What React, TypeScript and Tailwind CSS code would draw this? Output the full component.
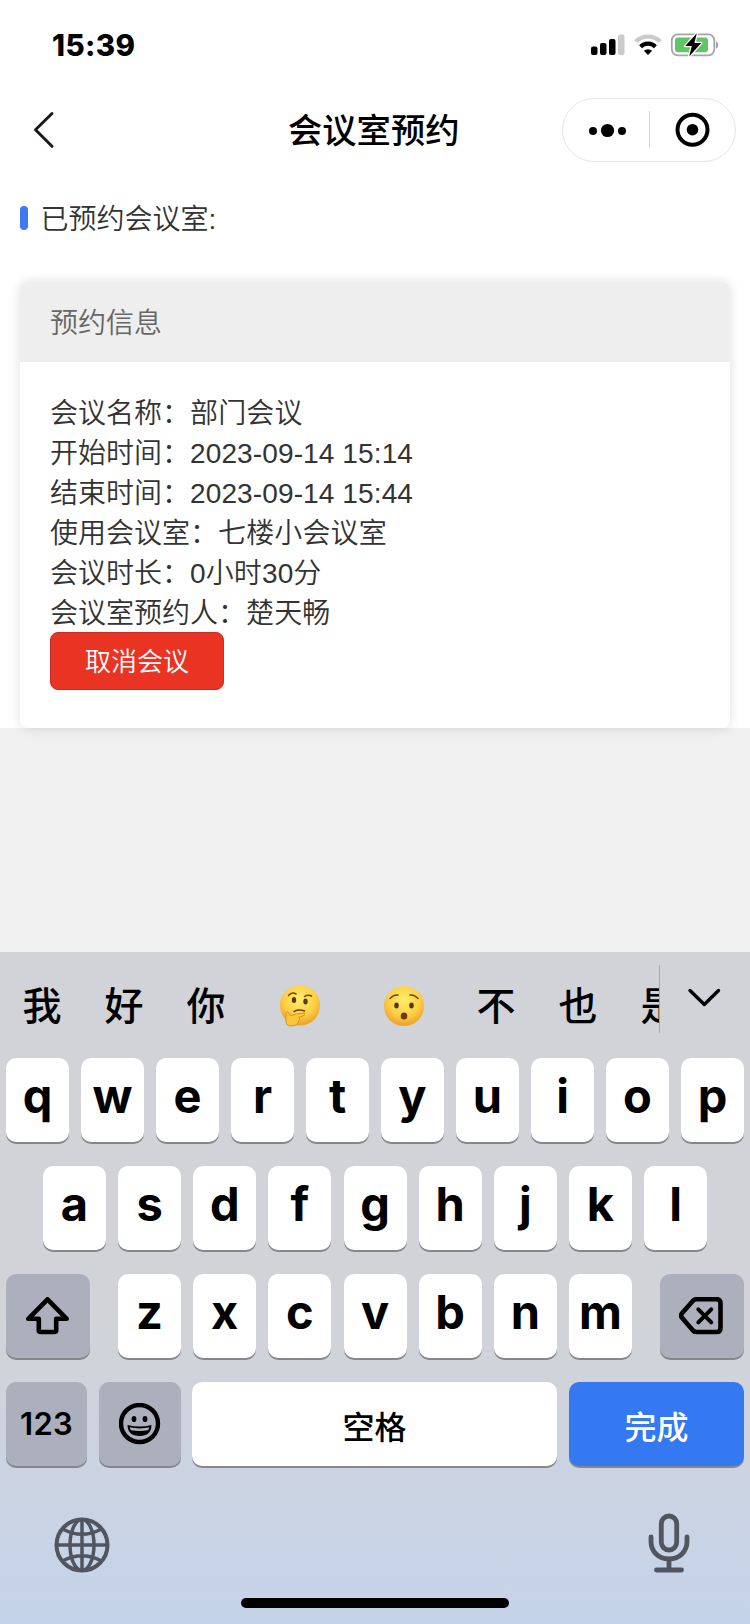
import * as React from "react";

const TEXT_FONT = "font-['Liberation_Sans','Noto_Sans_CJK_SC',sans-serif]";
const KEY_FONT = "font-['Inter','Noto_Sans_CJK_SC',sans-serif]";

const BOOKING = [
  { label: "会议名称", value: "部门会议" },
  { label: "开始时间", value: "2023-09-14 15:14" },
  { label: "结束时间", value: "2023-09-14 15:44" },
  { label: "使用会议室", value: "七楼小会议室" },
  { label: "会议时长", value: "0小时30分" },
  { label: "会议室预约人", value: "楚天畅" },
];

export default function App() {
  return (
    <div className={`flex h-[1624px] w-[750px] flex-col overflow-hidden bg-[#f0f0f0] text-[#333] ${TEXT_FONT}`}>
      <div className="h-[728px] shrink-0 bg-white">
        <StatusBar />
        <NavBar />
        <main className="px-5">
          <h2 className="mt-[26px] flex h-10 items-center text-[28px] font-[350]">
            <span className="mr-[12.5px] h-6 w-2 rounded-full bg-[#3f77f5]" />
            <span className="pt-[3px]">已预约会议室:</span>
          </h2>
          <BookingCard />
        </main>
      </div>
      <div className="h-56 shrink-0" />
      <Keyboard />
    </div>
  );
}

function StatusBar() {
  return (
    <div className="flex h-[88px] items-center justify-between pl-[52px] pr-[31px]">
      <span className={`pt-[3px] text-[29.5px] font-extrabold leading-none tracking-[0.4px] text-black ${KEY_FONT}`}>
        15:39
      </span>
      <svg className="mt-0.5" width="128" height="24" viewBox="0 0 128 24">
        {/* signal */}
        <rect x="0" y="13.5" width="6.5" height="8.5" rx="2" />
        <rect x="9" y="10" width="6.5" height="12" rx="2" />
        <rect x="18" y="6" width="6.5" height="16" rx="2" />
        <rect x="27" y="1.5" width="6.5" height="20.5" rx="2" fill="#cbcbcb" />
        {/* wifi */}
        <g fill="none" strokeWidth="4.2">
          <path d="M44.8 8.6a17.5 17.5 0 0 1 24.4 0" stroke="#cbcbcb" />
          <path d="M49.6 13.7a10.6 10.6 0 0 1 14.8 0" stroke="#000" />
        </g>
        <path d="M52.9 17.8a6 6 0 0 1 8.2 0L57 22z" />
        {/* battery */}
        <rect x="80.8" y="1.3" width="42.5" height="21" rx="6" fill="#fff" stroke="#a5a5a5" strokeWidth="1.8" />
        <rect x="84" y="4.5" width="33" height="14.8" rx="3" fill="#62c466" />
        <path d="M125 8.5c3 1 3 6 0 7z" fill="#a0a0a0" />
        <path
          d="M105.8.2 94.2 13h6.6l-2.6 10.4L110.2 10h-6.8z"
          stroke="#fff"
          strokeWidth="2.6"
          paintOrder="stroke"
          strokeLinejoin="round"
        />
      </svg>
    </div>
  );
}

function NavBar() {
  return (
    <header className="flex h-[84px] items-center pl-8 pr-[14px]">
      <svg className="w-64" width="256" height="38" viewBox="0 0 256 38" fill="none" stroke="#1a1a1a" strokeWidth="3">
        <path d="M20 2.500 3.500 18.800l16.500 16.500" strokeLinecap="round" strokeLinejoin="round" />
      </svg>
      <h1 className="mr-auto pt-[3px] text-[34.3px] font-medium leading-none text-black">会议室预约</h1>
      <div className="flex h-16 w-[174px] items-center rounded-full border border-[#e6e6e6]">
        <svg width="172" height="40" viewBox="0 0 172 40">
          <circle cx="30" cy="21" r="4" />
          <circle cx="44.5" cy="20.5" r="6.6" />
          <circle cx="59" cy="21" r="4" />
          <path d="M86.5 1v37" stroke="#d6d6d6" strokeWidth="1" />
          <circle cx="129.5" cy="19.7" r="15" fill="none" stroke="#000" strokeWidth="4" />
          <circle cx="129.5" cy="19.7" r="5.8" />
        </svg>
      </div>
    </header>
  );
}

function BookingCard() {
  return (
    <section className="mt-11 h-[446px] rounded-lg bg-white shadow-[0_0_12px_rgba(0,0,0,0.13)]">
      <h3 className="flex h-20 items-center rounded-t-lg bg-[#eee] px-[30px] pt-[3px] text-[28px] font-[350] text-[#666]">
        预约信息
      </h3>
      <div className="px-[30px] pt-[30px]">
        {BOOKING.map((row) => (
          <p key={row.label} className="h-10 pt-px text-[28px] font-[350] leading-[41px]">
            {row.label}：<span className="tracking-[0.12px]">{row.value}</span>
          </p>
        ))}
        <button
          type="button"
          className="flex h-[58px] w-[174px] items-center justify-center rounded-lg border border-[#c92c22] bg-[#e93323] pt-0.5 text-[26px] font-[350] text-white"
        >
          取消会议
        </button>
      </div>
    </section>
  );
}

function Keyboard() {
  return (
    <div className={`flex h-[672px] flex-col bg-linear-to-b from-[#d1d3d8] from-55% to-[#c5d3ea] text-black ${KEY_FONT}`}>
      <Candidates />
      <div className="flex flex-col gap-6 px-1.5">
        <div className="flex gap-3">
          {[..."qwertyuiop"].map((k) => (
            <Letter key={k}>{k}</Letter>
          ))}
        </div>
        <div className="flex gap-[12.15px] pl-[37px]">
          {[..."asdfghjkl"].map((k) => (
            <Letter key={k}>{k}</Letter>
          ))}
        </div>
        <div className="flex justify-between">
          <Key className="w-[84px] bg-[#abb0bc]">
            <svg width="44" height="38" viewBox="0 0 44 38" fill="none" stroke="#000" strokeWidth="4.6" strokeLinejoin="round">
              <path d="M21.500 2.300 2.300 21.800h10.500v11.700q0 1.500 2 1.500h13.400q2 0 2-1.500V21.800h10.500z" />
            </svg>
          </Key>
          <div className="flex gap-[12.15px]">
            {[..."zxcvbnm"].map((k) => (
              <Letter key={k}>{k}</Letter>
            ))}
          </div>
          <Key className="w-[84px] bg-[#abb0bc] pr-0.5">
            <svg width="44" height="38" viewBox="0 0 44 38" fill="none" stroke="#000" strokeWidth="4.6" strokeLinejoin="round">
              <path d="M17.500 2.200H37.500q4 0 4 4v24.800q0 4-4 4H17.500q-2 0-3.500-1.500L2.800 20.600q-1.500-2 0-4L14 3.700q1.500-1.500 3.500-1.500z" />
              <path d="m19.300 12.300 13 13m0-13-13 13" strokeWidth="4" strokeLinecap="round" />
            </svg>
          </Key>
        </div>
        <div className="flex">
          <Key className="w-[81px] bg-[#abb0bc] text-[31px] font-semibold tracking-[0.3px]">123</Key>
          <Key className="ml-3 w-[82px] bg-[#abb0bc]">
            <svg width="42" height="42" viewBox="0 0 42 42">
              <circle cx="20.5" cy="20.5" r="18.5" fill="none" stroke="#000" strokeWidth="4.4" />
              <ellipse cx="15" cy="16" rx="2.400" ry="3.100" />
              <ellipse cx="26" cy="16" rx="2.400" ry="3.100" />
              <path d="M8.500 22q12 3 24 0-.3 11-12 11T8.500 22z" />
              <path d="M10.800 24.300q9.700 2.200 19.400 0-.3 1.900-1.200 3-8.500 1.500-17 0-.9-1.100-1.200-3z" fill="#abb0bc" />
            </svg>
          </Key>
          <Key className="ml-[11px] w-[365px] bg-white pt-[7px] text-[32px] font-medium">空格</Key>
          <Key className="ml-3 w-[175px] bg-[#3478f2] pt-[7px] text-[32px] font-medium text-white">完成</Key>
        </div>
      </div>
      <div className="mt-[47px] flex items-center justify-between pl-[54px] pr-[60px]">
        <GlobeIcon />
        <MicIcon />
      </div>
      <div className="mx-auto mt-[25px] h-2.5 w-[268px] rounded-full bg-black" />
    </div>
  );
}

function Candidates() {
  return (
    <div className="flex h-[106px] pt-[13px]">
      <div className="flex h-[80px] w-[660px] items-center overflow-hidden pl-px text-[39px] font-medium">
        <Candidate>我</Candidate>
        <Candidate>好</Candidate>
        <Candidate>你</Candidate>
        <ThinkingFace />
        <HushedFace />
        <Candidate>不</Candidate>
        <Candidate>也</Candidate>
        <Candidate>是</Candidate>
      </div>
      <span className="-ml-px h-[68px] w-px bg-[#a4a8af]" />
      <svg className="ml-[27px] mt-[23px]" width="34" height="20" viewBox="0 0 34 20" fill="none" stroke="#000" strokeWidth="3.4">
        <path d="M3 2.500 17.300 16.500 31.500 2.500" strokeLinecap="round" strokeLinejoin="round" />
      </svg>
    </div>
  );
}

function Candidate({ children }: { children: React.ReactNode }) {
  return <span className="w-[82px] shrink-0 text-center leading-none">{children}</span>;
}

function Key({ className = "", children }: { className?: string; children: React.ReactNode }) {
  return (
    <button
      type="button"
      className={`flex h-[84px] shrink-0 items-center justify-center rounded-[10px] shadow-[0_2px_0_#85878c] ${className}`}
    >
      {children}
    </button>
  );
}

function Letter({ children }: { children: React.ReactNode }) {
  return <Key className="w-[63px] bg-white pb-2.5 text-[47px] font-bold leading-none">{children}</Key>;
}

function FaceGradient({ id }: { id: string }) {
  return (
    <radialGradient id={id} cx="0.5" cy="0.35" r="0.65">
      <stop offset="0" stopColor="#ffec70" />
      <stop offset="0.6" stopColor="#fdd045" />
      <stop offset="1" stopColor="#eca02b" />
    </radialGradient>
  );
}

function ThinkingFace() {
  return (
    <svg className="ml-8 mr-[30px] mt-0.5 shrink-0" width="42" height="42" viewBox="0 0 42 42">
      <defs>
        <FaceGradient id="thinking" />
      </defs>
      <circle cx="21" cy="20.5" r="20" fill="url(#thinking)" />
      <g fill="none" stroke="#6b4310" strokeWidth="1.5" strokeLinecap="round">
        <path d="M9.500 10.500q3.500-4 7.500-1.500M25.500 11.500q3-2 7-.5M15 26.500q5-2.500 10.500-.5" />
      </g>
      <ellipse cx="15" cy="15" rx="2.2" ry="3" fill="#5c3a0c" />
      <ellipse cx="26.5" cy="16.5" rx="2.2" ry="3" fill="#5c3a0c" />
      <path
        d="M7 28q1.500-3 3 .5l1.200 2.200q6-1.800 12.500-2.700 2.600 0 2 1.800-1 1.200-5.500 2.400 1 1.500-.3 3-.2 4-4 5.300-5 1.500-8-1-1.500-2-.9-11.500z"
        fill="#fcc63a"
        stroke="#d88a20"
        strokeWidth="0.9"
      />
    </svg>
  );
}

function HushedFace() {
  return (
    <svg className="ml-8 mr-[30px] mt-0.5 shrink-0" width="42" height="42" viewBox="0 0 42 42">
      <defs>
        <FaceGradient id="hushed" />
      </defs>
      <circle cx="21" cy="21" r="20" fill="url(#hushed)" />
      <path d="M7 13.500q3.500-4 8-3.500M35 13.500q-3.500-4-8-3.500" fill="none" stroke="#6b4310" strokeWidth="1.5" strokeLinecap="round" />
      <ellipse cx="13.5" cy="20.5" rx="2.3" ry="3" fill="#5c3a0c" />
      <ellipse cx="28.5" cy="20.5" rx="2.3" ry="3" fill="#5c3a0c" />
      <ellipse cx="21" cy="31" rx="3.3" ry="3.5" fill="#6b3d0c" />
    </svg>
  );
}

function GlobeIcon() {
  return (
    <svg className="mt-[3px]" width="56" height="56" viewBox="0 0 56 56" fill="none" stroke="#50555f" strokeWidth="3.5">
      <circle cx="28" cy="28" r="25.5" strokeWidth="4" />
      <ellipse cx="28" cy="28" rx="12" ry="25.5" />
      <path d="M28 2v52M2 28h52M9.500 12.500q18.500 9.500 37 0M9.500 43.500q18.500-9.500 37 0" />
    </svg>
  );
}

function MicIcon() {
  return (
    <svg width="42" height="60" viewBox="0 0 42 60" fill="none" stroke="#50555f" strokeWidth="4.8" strokeLinecap="round">
      <rect x="13.3" y="3" width="15.4" height="34" rx="7.7" />
      <path d="M3 24v4.500C3 38.500 10.500 46 21 46s18-7.500 18-17.500V24M21 46v10M8.500 57h25" />
    </svg>
  );
}
